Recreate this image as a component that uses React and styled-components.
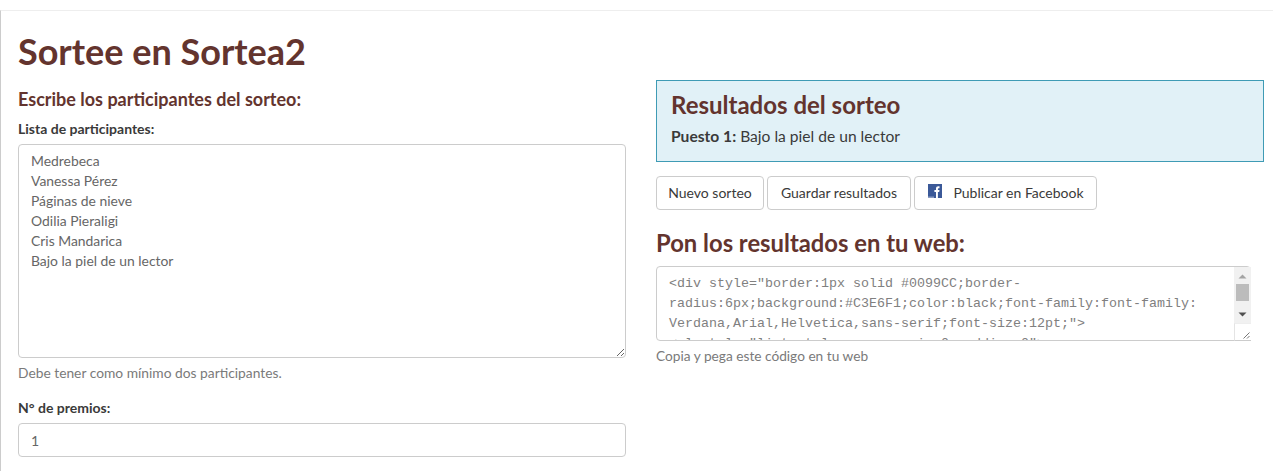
import React from "react";
import styled, { createGlobalStyle } from "styled-components";

const Global = createGlobalStyle`
  html, body { margin: 0; padding: 0; background: #fff; }
  body { font-family: Lato, "Liberation Sans", sans-serif; font-size: 14px; line-height: 20px; color: #333; overflow: hidden; }
`;

const Page = styled.div`
  height: 471px;
  box-sizing: border-box;
  overflow: hidden;
  border-left: 1px solid #ccc;
  margin-top: 10px;
  border-top: 1px solid #eee;
  padding: 0 9px 0 17px;
`;
const Title = styled.h1`
  margin: 20px 0 10px;
  font-size: 36px;
  line-height: 40px;
  font-weight: 700;
  color: #63342e;
`;
const Columns = styled.div`
  display: grid;
  grid-template-columns: 608px 608px;
  column-gap: 30px;
`;
const Column = styled.div`
  display: flex;
  flex-direction: column;
  align-items: stretch;
`;
const SubTitle = styled.h3`
  margin: 8px 0 10px;
  font-size: 18px;
  line-height: 20px;
  font-weight: 700;
  color: #63342e;
`;
const Label = styled.label`
  display: block;
  margin-bottom: 5px;
  font-weight: 700;
  font-size: 14px;
  color: #3a3a3a;
`;
const Field = styled.textarea`
  display: block;
  box-sizing: border-box;
  width: 100%;
  height: 214px;
  padding: 6px 12px;
  border: 1px solid #ccc;
  border-radius: 4px;
  font: 13.9px/20px Lato, sans-serif;
  color: #666;
  resize: vertical;
  outline: none;
`;
const Help = styled.p`
  margin: 5px 0 0;
  color: #7a7a7a;
  font-size: 13.8px;
  line-height: 20px;
`;
const PrizeGroup = styled.div`
  margin-top: 15px;
`;
const NumberInput = styled.input`
  display: block;
  box-sizing: border-box;
  width: 100%;
  height: 34px;
  padding: 6px 12px;
  border: 1px solid #ccc;
  border-radius: 4px;
  font: 14px/20px Lato, sans-serif;
  color: #666;
  outline: none;
`;
const ResultPanel = styled.section`
  box-sizing: border-box;
  height: 82px;
  margin-top: -1px;
  padding: 9px 14px 10px;
  background: #e1f1f7;
  border: 1px solid #3f9bb5;
`;
const ResultTitle = styled.h2`
  margin: 0 0 6px;
  font-size: 24px;
  line-height: 29px;
  font-weight: 700;
  color: #63342e;
`;
const ResultLine = styled.p`
  margin: 0;
  font-size: 15.6px;
  line-height: 22px;
  color: #3a3a3a;
`;
const Actions = styled.div`
  display: flex;
  gap: 3px;
  margin-top: 14px;
`;
const Button = styled.button`
  display: inline-flex;
  align-items: center;
  justify-content: center;
  box-sizing: border-box;
  width: ${(p) => p.$width}px;
  height: 34px;
  padding: 0;
  background: #fff;
  border: 1px solid #ccc;
  border-radius: 4px;
  font: 14px/20px Lato, sans-serif;
  color: #3a3a3a;
`;
const FacebookMark = styled.svg`
  width: 14px;
  height: 14px;
  margin: -5px 11px 0 1px;
`;
const WebTitle = styled.h3`
  margin: 20px 0 10px;
  font-size: 23.8px;
  line-height: 26px;
  font-weight: 700;
  color: #63342e;
`;
const CodeBox = styled.div`
  position: relative;
  width: 595px;
  height: 75px;
`;
const CodeArea = styled.textarea`
  display: block;
  box-sizing: border-box;
  width: 100%;
  height: 100%;
  padding: 7px 29px 0 12px;
  border: 1px solid #ccc;
  border-radius: 4px;
  font: 13.33px/20px "Liberation Mono", monospace;
  color: #808080;
  resize: none;
  outline: none;
  overflow: hidden;
`;
const ScrollRail = styled.div`
  position: absolute;
  top: 1px;
  right: 0;
  bottom: 0;
  width: 17px;
  display: flex;
  flex-direction: column;
`;
const ScrollTrack = styled.div`
  height: 56px;
  background: #f1f1f1;
  display: flex;
  flex-direction: column;
  align-items: center;
`;
const Arrow = styled.svg`
  display: block;
  width: 17px;
  height: ${(p) => p.$h}px;
  flex: none;
`;
const ScrollThumb = styled.div`
  width: 13px;
  height: 17px;
  flex: none;
  background: #bcbcbc;
`;
const ResizeCorner = styled.div`
  flex: 1;
  background: #fff;
  border-left: 1px solid #e4e4e4;
  border-bottom: 1px solid #ccc;
  border-top: 1px solid #eee;
`;
const Grip = styled.svg`
  display: block;
  width: 16px;
  height: 16px;
`;
const CodeHelp = styled(Help)`
  margin-top: 5px;
  font-size: 13.7px;
`;

const participants = "Medrebeca\nVanessa Pérez\nPáginas de nieve\nOdilia Pieraligi\nCris Mandarica\nBajo la piel de un lector";
const code = `<div style="border:1px solid #0099CC;border-radius:6px;background:#C3E6F1;color:black;font-family:font-family: Verdana,Arial,Helvetica,sans-serif;font-size:12pt;">
<ul style="list-style:none;margin:0;padding:0">`;

export default function App() {
  return (
    <>
      <Global />
      <Page>
        <Title>Sortee en Sortea2</Title>
        <Columns>
          <Column>
            <SubTitle>Escribe los participantes del sorteo:</SubTitle>
            <Label>Lista de participantes:</Label>
            <Field defaultValue={participants} />
            <Help>Debe tener como mínimo dos participantes.</Help>
            <PrizeGroup>
              <Label>N° de premios:</Label>
              <NumberInput defaultValue="1" />
            </PrizeGroup>
          </Column>
          <Column>
            <ResultPanel>
              <ResultTitle>Resultados del sorteo</ResultTitle>
              <ResultLine><strong>Puesto 1:</strong> Bajo la piel de un lector</ResultLine>
            </ResultPanel>
            <Actions>
              <Button $width={108}>Nuevo sorteo</Button>
              <Button $width={144}>Guardar resultados</Button>
              <Button $width={183}>
                <FacebookMark viewBox="0 0 14 14">
                  <rect width="14" height="14" fill="#3b5998" />
                  <path d="M8 14V8H6.400V6H8V4.600C8 3 9 2.200 10.300 2.200h1.200v2h-.8c-.6 0-.8.3-.8.8V6h1.600l-.3 2H9.900V14z" fill="#fff" />
                  <rect y="12.500" width="6" height="1.500" fill="#8b9dc3" />
                </FacebookMark>
                Publicar en Facebook
              </Button>
            </Actions>
            <WebTitle>Pon los resultados en tu web:</WebTitle>
            <CodeBox>
              <CodeArea defaultValue={code} />
              <ScrollRail>
                <ScrollTrack>
                  <Arrow $h={17} viewBox="0 0 17 17"><path d="M4.500 11.500h8l-4-4z" fill="#a3a3a3" /></Arrow>
                  <ScrollThumb />
                  <Arrow $h={5} viewBox="0 0 17 5"><rect width="17" height="5" fill="#f1f1f1" /></Arrow>
                  <Arrow $h={17} viewBox="0 0 17 17"><path d="M4.500 6.500h8l-4 4z" fill="#505050" /></Arrow>
                </ScrollTrack>
                <ResizeCorner>
                  <Grip viewBox="0 0 16 16">
                    <path d="M8.500 14.500l6-6M12 14.500l2.500-2.500" stroke="#777" strokeWidth="1" fill="none" />
                  </Grip>
                </ResizeCorner>
              </ScrollRail>
            </CodeBox>
            <CodeHelp>Copia y pega este código en tu web</CodeHelp>
          </Column>
        </Columns>
      </Page>
    </>
  );
}
